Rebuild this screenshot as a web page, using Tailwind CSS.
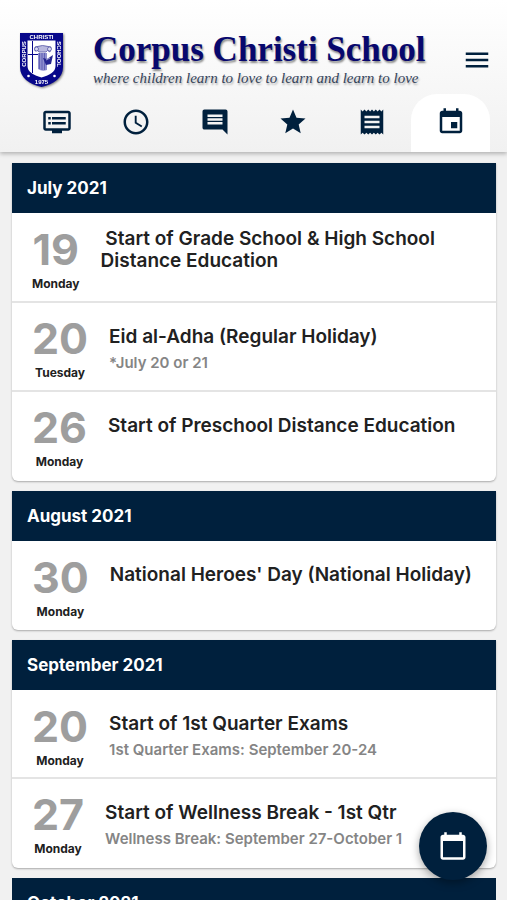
<!DOCTYPE html>
<html lang="en">
<head>
<meta charset="utf-8">
<meta name="viewport" content="width=device-width, initial-scale=1">
<title>Corpus Christi School</title>
<script src="https://cdn.jsdelivr.net/npm/@tailwindcss/browser@4"></script>
</head>
<body class="flex h-screen flex-col overflow-hidden bg-[#f1f1f1] font-['Inter',sans-serif] text-[#212121]">

<header class="relative z-10 shrink-0 bg-linear-to-b from-white to-[#f1f1f1] pt-[26px] shadow-[0_2px_4px_rgba(0,0,0,0.25)]">
  <div class="flex h-[68px] items-center pr-[15px] pl-[18px]">
    <svg class="h-[60px] w-12 shrink-0 drop-shadow-[1px_1px_1px_rgba(0,0,0,0.5)]" viewBox="0 0 48 60" role="img" aria-label="School crest">
      <path d="M2 3H45V37C45 48 36 54 23.500 57C11 54 2 48 2 37Z" fill="#07078a"/>
      <path d="M9.500 10.500H37.500V36C37.500 42 32 45 23.500 47.500C15 45 9.500 42 9.500 36Z" fill="#fff"/>
      <path d="M14.500 11V43M10 24.500H20" stroke="#07078a" stroke-width="1" fill="none"/>
      <path d="M20 23H29V40Q24 42 20 39Z" fill="#8f8fce"/>
      <path d="M21.500 23V39M24 23V40M26.500 23V40" stroke="#4d4dab" stroke-width=".7"/>
      <path d="M17 17Q24 14 33 17L32 22Q29 19 28 22H21Q20 19 17 21Z" fill="#b9b9de" stroke="#5555a6" stroke-width=".8"/>
      <circle cx="18.500" cy="19" r="2" fill="#dcdcf2" stroke="#5555a6" stroke-width=".8"/>
      <circle cx="31.500" cy="19" r="2" fill="#dcdcf2" stroke="#5555a6" stroke-width=".8"/>
      <path d="M25 28L29 29L35 25L33 34L28 35Z" fill="#252590"/>
      <path d="M28 30L32 28" stroke="#b9b9de" stroke-width=".8"/>
      <circle cx="10.500" cy="46" r="1.300" fill="#fff"/>
      <circle cx="36.500" cy="46" r="1.300" fill="#fff"/>
      <g fill="#fff" font-family="Liberation Sans, sans-serif" font-weight="700" font-size="6" text-anchor="middle">
        <text x="23.500" y="9">CHRISTI</text>
        <text transform="translate(8 24) rotate(-90)">CORPUS</text>
        <text transform="translate(39.200 24) rotate(90)">SCHOOL</text>
        <text x="23.500" y="53.500">1975</text>
      </g>
    </svg>
    <div class="ml-[27px] min-w-0 flex-1 whitespace-nowrap">
      <h1 class="font-['Liberation_Serif',serif] text-[35px] leading-9 font-bold text-[#08086e] [text-shadow:1px_2px_2px_rgba(0,0,0,0.45)]">Corpus Christi School</h1>
      <p class="font-['Liberation_Serif',serif] text-[15px] leading-5 text-[#34435a] italic [text-shadow:1px_2px_2px_rgba(0,0,0,0.3)]">where children learn to love to learn and learn to love</p>
    </div>
    <button type="button" aria-label="Menu" class="shrink-0"><svg class="size-[30px] fill-[#00203d]" viewBox="0 0 24 24"><path d="M3 18h18v-2H3v2zm0-5h18v-2H3v2zm0-7v2h18V6H3z"/></svg></button>
  </div>
  <nav class="grid grid-cols-6 pr-[17px] pl-[18px]">
    <a href="#news" aria-label="News" class="flex h-[58px] items-center justify-center pb-0.5"><svg class="size-[30px] fill-[#00203d]" viewBox="0 0 24 24"><path d="M21 3H3c-1.100 0-2 .9-2 2v12c0 1.100.9 2 2 2h5v2h8v-2h5c1.100 0 1.990-.9 1.990-2L23 5c0-1.100-.9-2-2-2zm0 14H3V5h18v12zm-2-9H8v2h11V8zm0 4H8v2h11v-2zM7 8H5v2h2V8zm0 4H5v2h2v-2z"/></svg></a>
    <a href="#schedule" aria-label="Schedule" class="flex h-[58px] items-center justify-center pb-0.5"><svg class="size-[30px] fill-[#00203d]" viewBox="0 0 24 24"><path d="M11.990 2C6.470 2 2 6.480 2 12s4.470 10 9.990 10C17.520 22 22 17.520 22 12S17.520 2 11.990 2zM12 20c-4.420 0-8-3.580-8-8s3.580-8 8-8 8 3.580 8 8-3.580 8-8 8zm.5-13H11v6l5.250 3.150.75-1.230-4.500-2.670z"/></svg></a>
    <a href="#messages" aria-label="Messages" class="flex h-[58px] items-center justify-center pb-0.5"><svg class="size-[30px] fill-[#00203d]" viewBox="0 0 24 24"><path d="M20.500 2H3.500c-.8 0-1.500.7-1.500 1.500v13c0 .8.7 1.500 1.500 1.500H18l4 4V3.500c0-.8-.7-1.500-1.500-1.500zM18 14H6v-2h12v2zm0-3H6V9h12v2zm0-3H6V6h12v2z"/></svg></a>
    <a href="#grades" aria-label="Grades" class="flex h-[58px] items-center justify-center pb-0.5"><svg class="size-[30px] fill-[#00203d]" viewBox="0 0 24 24"><path d="M12 17.270L18.180 21l-1.640-7.030L22 9.240l-7.190-.61L12 2 9.190 8.630 2 9.240l5.460 4.730L5.820 21z"/></svg></a>
    <a href="#billing" aria-label="Billing" class="flex h-[58px] items-center justify-center pb-0.5"><svg class="size-[30px] fill-[#00203d]" viewBox="0 0 24 24"><path d="M18 17H6v-2h12v2zm0-4H6v-2h12v2zm0-4H6V7h12v2zM3 22l1.500-1.500L6 22l1.500-1.500L9 22l1.500-1.500L12 22l1.500-1.500L15 22l1.500-1.500L18 22l1.500-1.500L21 22V2l-1.500 1.500L18 2l-1.500 1.500L15 2l-1.500 1.500L12 2l-1.500 1.500L9 2 7.500 3.500 6 2 4.500 3.500 3 2v20z"/></svg></a>
    <a href="#calendar" aria-label="Calendar" aria-current="page" class="flex h-[58px] items-center justify-center rounded-t-[26px] bg-white pb-0.5"><svg class="size-[30px] fill-[#00203d]" viewBox="0 0 24 24"><path d="M17 12h-5v5h5v-5zM16 1v2H8V1H6v2H5c-1.110 0-1.990.9-1.990 2L3 19c0 1.100.89 2 2 2h14c1.100 0 2-.9 2-2V5c0-1.100-.9-2-2-2h-1V1h-2zm3 18H5V8h14v11z"/></svg></a>
  </nav>
</header>

<main class="flex min-h-0 flex-1 flex-col gap-2.5 overflow-y-auto pt-[11px] pr-[11px] pl-3 [scrollbar-width:none]">
  <section class="shrink-0 rounded-b-md bg-white shadow-[0_1px_2px_rgba(0,0,0,0.3)]">
    <h2 class="bg-[#00203d] px-[15px] text-[17px] leading-[50px] font-bold text-white">July 2021</h2>
    <ul class="divide-y-2 divide-[#e4e4e4]">
      <li class="flex min-h-[90px] gap-[21px] px-5 pt-[11px]">
        <div class="flex flex-col items-center"><span class="text-[43px] leading-[51px] font-bold text-[#9e9e9e]">19</span><span class="text-xs leading-[18px] font-bold">Monday</span></div>
        <div class="pt-1"><h3 class="text-[19px] leading-[22px] font-semibold">&nbsp;Start of Grade School &amp; High School<br>Distance Education</h3></div>
      </li>
      <li class="flex min-h-[89px] gap-[21px] px-5 pt-2.5">
        <div class="flex flex-col items-center"><span class="text-[43px] leading-[51px] font-bold text-[#9e9e9e]">20</span><span class="text-xs leading-[18px] font-bold">Tuesday</span></div>
        <div class="pt-[13px]"><h3 class="text-[19px] leading-[22px] font-semibold">Eid al-Adha (Regular Holiday)</h3><p class="pt-1 text-[15px] leading-[22px] font-semibold text-[#858585]">*July 20 or 21</p></div>
      </li>
      <li class="flex min-h-[89px] gap-[21px] px-5 pt-2.5">
        <div class="flex flex-col items-center"><span class="text-[43px] leading-[51px] font-bold text-[#9e9e9e]">26</span><span class="text-xs leading-[18px] font-bold">Monday</span></div>
        <div class="pt-[13px]"><h3 class="text-[19px] leading-[22px] font-semibold">Start of Preschool Distance Education</h3></div>
      </li>
    </ul>
  </section>

  <section class="shrink-0 rounded-b-md bg-white shadow-[0_1px_2px_rgba(0,0,0,0.3)]">
    <h2 class="bg-[#00203d] px-[15px] text-[17px] leading-[50px] font-bold text-white">August 2021</h2>
    <ul>
      <li class="flex min-h-[89px] gap-[21px] px-5 pt-[11px]">
        <div class="flex flex-col items-center"><span class="text-[43px] leading-[51px] font-bold text-[#9e9e9e]">30</span><span class="text-xs leading-[18px] font-bold">Monday</span></div>
        <div class="pt-3"><h3 class="text-[19px] leading-[22px] font-semibold whitespace-nowrap">National Heroes' Day (National Holiday)</h3></div>
      </li>
    </ul>
  </section>

  <section class="shrink-0 rounded-b-md bg-white shadow-[0_1px_2px_rgba(0,0,0,0.3)]">
    <h2 class="bg-[#00203d] px-[15px] text-[17px] leading-[50px] font-bold text-white">September 2021</h2>
    <ul class="divide-y-2 divide-[#e4e4e4]">
      <li class="flex min-h-[89px] gap-[21px] px-5 pt-[11px]">
        <div class="flex flex-col items-center"><span class="text-[43px] leading-[51px] font-bold text-[#9e9e9e]">20</span><span class="text-xs leading-[18px] font-bold">Monday</span></div>
        <div class="pt-3"><h3 class="text-[19px] leading-[22px] font-semibold">Start of 1st Quarter Exams</h3><p class="pt-1 text-[15px] leading-[22px] font-semibold text-[#858585]">1st Quarter Exams: September 20-24</p></div>
      </li>
      <li class="flex min-h-[89px] gap-[21px] px-5 pt-2.5">
        <div class="flex flex-col items-center"><span class="text-[43px] leading-[51px] font-bold text-[#9e9e9e]">27</span><span class="text-xs leading-[18px] font-bold">Monday</span></div>
        <div class="pt-[13px]"><h3 class="text-[19px] leading-[22px] font-semibold">Start of Wellness Break - 1st Qtr</h3><p class="pt-1 text-[15px] leading-[22px] font-semibold text-[#858585]">Wellness Break: September 27-October 1</p></div>
      </li>
    </ul>
  </section>

  <section class="shrink-0">
    <h2 class="bg-[#00203d] px-[15px] text-[17px] leading-[50px] font-bold text-white">October 2021</h2>
  </section>
</main>

<button type="button" aria-label="Pick a date" class="fixed right-5 bottom-5 z-20 flex size-[68px] items-center justify-center rounded-full bg-[#00203d] shadow-[0_3px_8px_rgba(0,0,0,0.35)]"><svg class="size-[30px] fill-white" viewBox="0 0 24 24"><path d="M20 3h-1V1h-2v2H7V1H5v2H4c-1.100 0-2 .9-2 2v16c0 1.100.9 2 2 2h16c1.100 0 2-.9 2-2V5c0-1.100-.9-2-2-2zm0 18H4V8h16v13z"/></svg></button>
</body>
</html>
